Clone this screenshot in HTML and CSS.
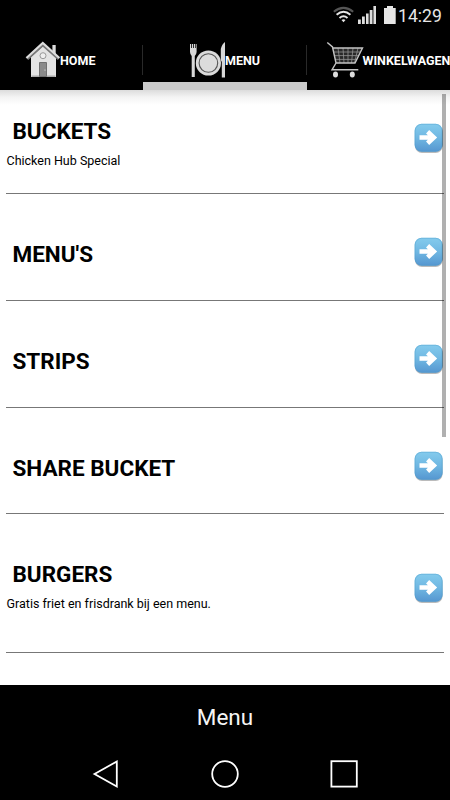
FILE: index.html
```html
<!DOCTYPE html>
<html lang="nl">
<head>
<meta charset="utf-8">
<title>Menu</title>
<link rel="stylesheet" href="styles.css">
</head>
<body>
<svg class="defs" width="0" height="0" aria-hidden="true">
  <defs>
    <linearGradient id="blue" x1="0" y1="0" x2="0" y2="1">
      <stop offset="0" stop-color="#84cbed"/><stop offset=".5" stop-color="#6fb7e2"/><stop offset="1" stop-color="#5596d0"/>
    </linearGradient>
    <symbol id="go" viewBox="0 0 30 31">
      <rect x="1" y="2" width="27.6" height="28" rx="7" fill="#777" opacity=".5"/>
      <rect x=".6" y=".8" width="28" height="28" rx="7" fill="url(#blue)"/>
      <rect x="1.1" y="1.3" width="27" height="27" rx="6.5" fill="none" stroke="#4e9bc9" stroke-width="1" opacity=".4"/>
      <path d="M5.5 14.5H18M13.6 8.7L19.8 14.5L13.6 20.3" fill="none" stroke="#fff" stroke-width="4.6"/>
    </symbol>
  </defs>
</svg>
<div class="screen">
  <header class="status">
    <svg width="48" height="20" viewBox="0 0 48 20">
      <g fill="none" stroke-width="2">
        <path d="M.8 6.8Q10.5-1.1 20.2 6.8" stroke="#555"/>
        <path d="M3.6 9.7Q10.5 3.9 17.4 9.7M6.5 13Q10.5 9.6 14.5 13" stroke="#e6e6e6"/>
      </g>
      <path d="M8.5 15Q10.5 13.4 12.5 15L10.5 17.2Z" fill="#e6e6e6"/>
      <path d="M25 14.5h2.8V19H25zM29 11.5h2.8V19H29zM33 8.5h2.6V19H33zM36.7 5h2.8v14h-2.8zM40.4 1H43v18h-2.6z" fill="#dedede"/>
    </svg>
    <svg class="battery" width="12" height="19" viewBox="0 0 12 19"><path d="M3 0H9V2H11.7V18H0V2H3Z" fill="#e6e6e6"/></svg>
    <span class="clock">14:29</span>
  </header>
  <nav class="tabs">
    <a class="tab home">
      <svg width="36" height="38" viewBox="25 41 36 38">
        <path d="M52.4 45H55.7V57H52.4Z" fill="#ddd"/>
        <path d="M31 57L43 46L56 57V77H31Z" fill="#e3e3e3"/>
        <path d="M31.5 75.5H55.5V77H31.5Z" fill="#aaa"/>
        <path d="M27.4 59.2L42.8 45L58.6 59.2" fill="none" stroke="#777" stroke-width="2.4"/>
        <path d="M26.4 58L42.8 43L59.4 58" fill="none" stroke="#ddd" stroke-width="2.2"/>
        <circle cx="43" cy="55.7" r="3" fill="#eee" stroke="#999"/>
        <path d="M39.5 62.5H46.5V76.5H39.5Z" fill="#8a8a8a" stroke="#707070"/>
        <circle cx="45" cy="70" r=".6" fill="#eee"/>
      </svg><span>HOME</span>
    </a>
    <a class="tab active">
      <svg width="36" height="38" viewBox="189 41 36 38">
        <path d="M190 44H191.2V48H192V44H193.2V48H194V44H195V48H195.7V44H196.6V52Q196.4 54.8 194.8 56V77H191.7V56Q190.2 54.7 190 52Z" fill="#d8d8d8"/>
        <circle cx="208.4" cy="63" r="12.6" fill="#dadada"/>
        <circle cx="208.4" cy="63" r="9.3" fill="#dcdcdc" stroke="#555" stroke-width="1.1"/>
        <path d="M225 42V77.5H221.8V62L220.8 60V49Q222 44 225 42Z" fill="#d8d8d8"/>
      </svg><span>MENU</span>
    </a>
    <a class="tab cart">
      <svg width="38" height="38" viewBox="326 41 38 38">
        <path d="M333 48H362.5L355 63H336Z" fill="#292929"/>
        <path d="M333.5 52H360.5M334.2 55.6H359M335 59.4H357M338 48L340 63M343 48L344 63M348 48V63M353 48L351.5 63M358 48L354.5 63" fill="none" stroke="#929292" stroke-width=".8"/>
        <path d="M327.3 42.5L332.5 47L336 63L332 69.8H358.3M332.8 48H362.5L355 63H336" fill="none" stroke="#c4c4c4" stroke-width="1.4"/>
        <ellipse cx="335.5" cy="74.6" rx="2.5" ry="3" fill="#ddd"/><ellipse cx="352.3" cy="74.6" rx="2.5" ry="3" fill="#ddd"/>
      </svg><span>WINKELWAGEN</span>
    </a>
  </nav>
  <main class="list">
    <div class="scrollbar"></div>
    <section class="row first"><div><h2>BUCKETS</h2><p>Chicken Hub Special</p></div><svg class="go"><use href="#go"/></svg></section>
    <section class="row"><div><h2>MENU'S</h2></div><svg class="go"><use href="#go"/></svg></section>
    <section class="row"><div><h2>STRIPS</h2></div><svg class="go"><use href="#go"/></svg></section>
    <section class="row"><div><h2>SHARE BUCKET</h2></div><svg class="go"><use href="#go"/></svg></section>
    <section class="row tall"><div><h2>BURGERS</h2><p>Gratis friet en frisdrank bij een menu.</p></div><svg class="go"><use href="#go"/></svg></section>
  </main>
  <footer class="title">Menu</footer>
  <div class="system">
    <svg width="28" height="30" viewBox="0 0 28 30"><path d="M2.5 15L24.8 2.5V27.5Z"/></svg>
    <svg width="30" height="30" viewBox="0 0 30 30"><circle cx="15" cy="15" r="12.8"/></svg>
    <svg width="30" height="30" viewBox="0 0 30 30"><rect x="2.4" y="2.2" width="25.4" height="25.4"/></svg>
  </div>
</div>
</body>
</html>
```
FILE: styles.css
```css
* { box-sizing: border-box; }
body { margin: 0; background: #000; font-family: Roboto, sans-serif; }
.defs { position: absolute; }
.screen { width: 450px; height: 800px; overflow: hidden; display: flex; flex-direction: column; }
.status { height: 34px; flex: none; display: flex; justify-content: flex-end; align-items: flex-start; padding: 5px 9px 0 0; color: #e6e6e6; }
.battery { margin: 1px 2px 0 3px; }
.clock { width: 43px; font-size: 17.6px; line-height: 22px; white-space: nowrap; }
.tabs { height: 56px; flex: none; display: flex; color: #fff; font-size: 12.5px; font-weight: 700; }
.tab { position: relative; flex: none; display: flex; align-items: center; height: 56px; padding-bottom: 4px; white-space: nowrap; }
.tab svg { flex: none; }
.home { width: 143px; padding-left: 25px; }
.home span { margin-left: -1px; }
.active { width: 164px; padding-left: 46px; border-bottom: 8px solid #cbcbcb; padding-bottom: 0; }
.active svg, .active span { position: relative; top: 2px; }
.cart { width: 164px; padding-left: 19px; }
.cart span { margin-left: -1.5px; }
.active::before, .cart::before { content: ""; position: absolute; left: -1px; top: 11px; width: 1px; height: 30px; background: #292929; }
.list { position: relative; height: 595px; flex: none; padding: 0 6px; overflow: hidden; background: linear-gradient(#dcdcdc, #f3f3f3 7px, #fff 15px); color: #000; }
.scrollbar { position: absolute; z-index: 1; right: 4px; top: 4px; width: 4px; height: 343px; background: rgba(0,0,0,.31); }
.row { display: flex; justify-content: space-between; height: 106.6px; padding-top: 43px; border-bottom: 1px solid #777; }
.row.first { height: 104.4px; padding-top: 26px; }
.row.tall { height: 138.6px; }
.row h2 { margin: 2px 0 0 6.5px; font-size: 22.5px; line-height: 30px; font-weight: 700; }
.row.first h2 { margin-top: 0; }
.row p { margin: 7px 0 0 .5px; font-size: 12.5px; line-height: 16px; }
.go { flex: none; width: 30px; height: 31px; margin-top: 0; }
.first .go { margin-top: 7px; }
.row.tall .go { margin-top: 16px; }
.title { height: 64px; flex: none; display: flex; align-items: center; justify-content: center; color: #f5f5f5; font-size: 22.5px; }
.system { height: 51px; flex: none; display: flex; justify-content: space-between; padding: 10px 91px 0 92px; }
.system svg { fill: none; stroke: #fff; stroke-width: 1.8; }
```
